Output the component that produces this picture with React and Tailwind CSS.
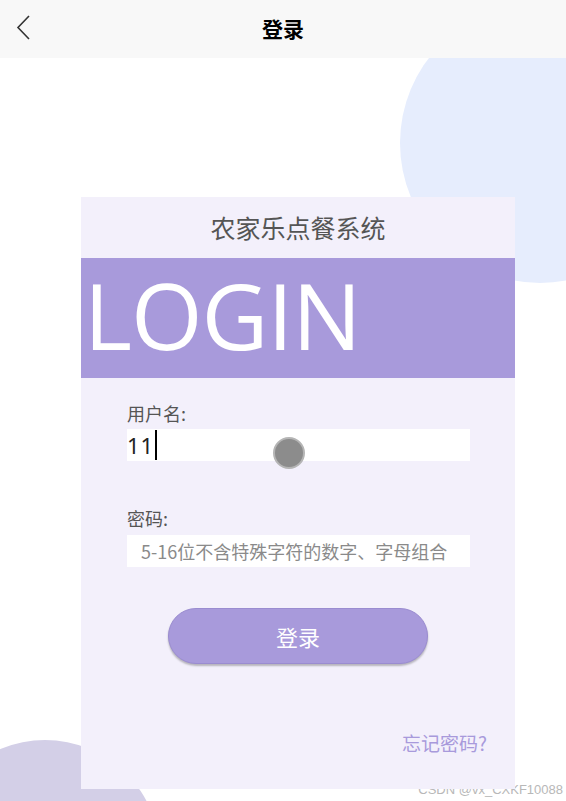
import React from 'react';

const cjk = { fontFamily: '"Noto Sans CJK SC", "Noto Sans", sans-serif' };

export default function App() {
  return (
    <div className="relative h-[801px] w-[566px] overflow-hidden bg-white" style={cjk}>
      {/* decorative circles */}
      <div className="absolute left-[400px] top-[3px] h-[280px] w-[280px] rounded-full bg-[#e6edfd]" />
      <div className="absolute left-[-70px] top-[740px] h-[230px] w-[230px] rounded-full bg-[#d3cfe7]" />

      <header className="relative z-10 flex h-[58px] items-center justify-center bg-[#f8f8f8]">
        <svg className="absolute left-[16px] top-[15px]" width="16" height="25" viewBox="0 0 16 25" fill="none">
          <path d="M13 1 L2 12.5 L13 24" stroke="#333" strokeWidth="1.6" />
        </svg>
        <h1 className="text-[21px] font-bold text-black">登录</h1>
      </header>

      <div className="relative z-10 ml-[81px] mt-[139px] flex h-[592px] w-[434px] flex-col bg-[#f3f0fb]">
        <div className="flex h-[61px] items-center justify-center text-[25px] text-[#555]">农家乐点餐系统</div>
        <div className="flex h-[120px] items-center bg-[#a89adb] pb-[6px] pl-[3px]">
          <span className="text-[92px] leading-none tracking-[-1px] text-white" style={{ fontFamily: '"Open Sans", sans-serif' }}>LOGIN</span>
        </div>

        <div className="flex flex-col px-[46px] pt-[20px]">
          <label className="text-[18px] leading-[30px] text-[#555]">用户名:</label>
          <div className="relative mt-[1px] flex h-[32px] w-[343px] items-center bg-white">
            <span className="text-[22px] tracking-[1px] text-[#222]" style={{ fontFamily: '"Noto Sans", sans-serif' }}>11</span>
            <span className="ml-[1px] h-[30px] w-[1.5px] bg-black" />
            <div className="absolute left-[146px] top-[8px] h-[32px] w-[32px] rounded-full border-2 border-[#b5b5b5] bg-[#8c8c8c]" />
          </div>

          <label className="mt-[42px] text-[18px] leading-[30px] text-[#555]">密码:</label>
          <div className="mt-[2px] flex h-[32px] w-[343px] items-center bg-white pl-[14px] text-[18px] text-[#8a8a8a]">
            5-16位不含特殊字符的数字、字母组合
          </div>

          <button className="mx-auto mt-[41px] h-[56px] w-[260px] rounded-full border border-[#9a8cd0] bg-[#a89adb] text-[22px] text-white shadow-[0_2px_2px_rgba(0,0,0,0.25)]">
            登录
          </button>
        </div>

        <div className="mt-auto mb-[32px] pr-[28px] text-right text-[19px] text-[#a89adb]">忘记密码?</div>
      </div>

      <div className="absolute bottom-[2px] right-[3px] text-[13px] text-[#b8b8b8]" style={{ fontFamily: '"Liberation Sans", sans-serif' }}>
        CSDN @vx_CXKF10088
      </div>
    </div>
  );
}
